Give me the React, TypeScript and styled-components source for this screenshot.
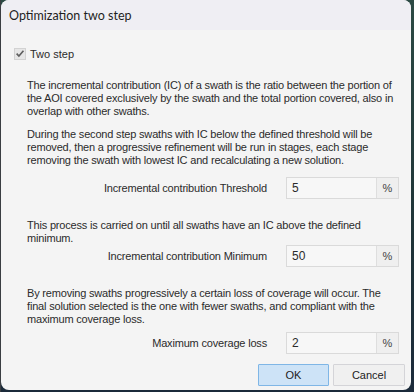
import React from 'react'
import styled, {createGlobalStyle} from 'styled-components'

const GlobalStyle = createGlobalStyle`
  html, body {
    margin: 0;
    padding: 0;
    background: #233a37;
  }
  body {
    width: 414px;
    height: 392px;
    overflow: hidden;
  }
`

const Fields = [
    {label: 'Incremental contribution Threshold', value: '5'},
    {label: 'Incremental contribution Minimum', value: '50'},
    {label: 'Maximum coverage loss', value: '2'},
]

export default function App() {
    return (
        <>
            <GlobalStyle />
            <Desktop>
                <Window>
                    <TitleBar>Optimization two step</TitleBar>
                    <Body>
                        <CheckRow>
                            <CheckBox>
                                <svg width="11" height="11" viewBox="0 0 11 11">
                                    <path d="M1.8 5.6 L4.3 8.2 L9.3 2.4" fill="none" stroke="#5f5f5f" strokeWidth="1.8" />
                                </svg>
                            </CheckBox>
                            <CheckLabel>Two step</CheckLabel>
                        </CheckRow>

                        <Paragraph top={19}>
                            The incremental contribution (IC) of a swath is the ratio between the portion of<br />
                            the AOI covered exclusively by the swath and the total portion covered, also in<br />
                            overlap with other swaths.
                        </Paragraph>
                        <Paragraph top={10}>
                            During the second step swaths with IC below the defined threshold will be<br />
                            removed, then a progressive refinement will be run in stages, each stage<br />
                            removing the swath with lowest IC and recalculating a new solution.
                        </Paragraph>
                        <FieldRow top={10}>
                            <FieldLabel>{Fields[0].label}</FieldLabel>
                            <Field>
                                <FieldValue>{Fields[0].value}</FieldValue>
                                <Unit>%</Unit>
                            </Field>
                        </FieldRow>

                        <Paragraph top={20}>
                            This process is carried on until all swaths have an IC above the defined<br />
                            minimum.
                        </Paragraph>
                        <FieldRow top={0}>
                            <FieldLabel>{Fields[1].label}</FieldLabel>
                            <Field>
                                <FieldValue>{Fields[1].value}</FieldValue>
                                <Unit>%</Unit>
                            </Field>
                        </FieldRow>

                        <Paragraph top={20}>
                            By removing swaths progressively a certain loss of coverage will occur. The<br />
                            final solution selected is the one with fewer swaths, and compliant with the<br />
                            maximum coverage loss.
                        </Paragraph>
                        <FieldRow top={6}>
                            <FieldLabel>{Fields[2].label}</FieldLabel>
                            <Field>
                                <FieldValue>{Fields[2].value}</FieldValue>
                                <Unit>%</Unit>
                            </Field>
                        </FieldRow>

                        <ButtonRow>
                            <Button primary>OK</Button>
                            <Button>Cancel</Button>
                        </ButtonRow>
                    </Body>
                </Window>
            </Desktop>
        </>
    )
}

const Desktop = styled.div`
  width: 414px;
  height: 392px;
  background: linear-gradient(180deg, #2c4a44 0%, #1f3438 60%, #1b2a3a 100%);
  padding-left: 1px;
  box-sizing: border-box;
  border-left: 1px solid #3a3d42;
`

const Window = styled.div`
  width: 410px;
  height: 390px;
  margin-left: -1px;
  background: #f4f4f4;
  border-radius: 8px;
  overflow: hidden;
  display: flex;
  flex-direction: column;
  font-family: 'Liberation Sans', Arial, sans-serif;
  color: #2b2b2b;
`

const TitleBar = styled.div`
  height: 30px;
  flex: none;
  display: flex;
  align-items: center;
  padding-left: 8px;
  background: #efeef3;
  font-family: Lato, 'Open Sans', sans-serif;
  font-size: 12.5px;
  color: #1e1e1e;
`

const Body = styled.div`
  display: flex;
  flex-direction: column;
  padding: 0 12px 0 13px;
`

const CheckRow = styled.div`
  display: flex;
  align-items: center;
  gap: 4px;
  margin-top: 17px;
  height: 13px;
`

const CheckBox = styled.span`
  width: 12px;
  height: 12px;
  box-sizing: border-box;
  border: 1px solid #d2d2d2;
  background: #e6e6e6;
  display: flex;
  align-items: center;
  justify-content: center;
`

const CheckLabel = styled.span`
  font-size: 11px;
`

const Paragraph = styled.p<{top: number}>`
  margin: ${p => p.top}px 0 0 13px;
  font-size: 11px;
  letter-spacing: -0.18px;
  line-height: 13px;
  white-space: nowrap;
`

const FieldRow = styled.div<{top: number}>`
  display: flex;
  justify-content: flex-end;
  align-items: center;
  gap: 19px;
  margin-top: ${p => p.top}px;
`

const FieldLabel = styled.span`
  font-size: 11px;
  letter-spacing: -0.18px;
`

const Field = styled.div`
  width: 113px;
  height: 22px;
  box-sizing: border-box;
  border: 1px solid #dadada;
  background: #f7f7f7;
  display: flex;
`

const FieldValue = styled.span`
  flex: 1;
  display: flex;
  align-items: center;
  padding-left: 5px;
  font-size: 12px;
`

const Unit = styled.span`
  width: 21px;
  border-left: 1px solid #dedede;
  background: #efefef;
  display: flex;
  align-items: center;
  justify-content: center;
  font-size: 11px;
  color: #444;
`

const ButtonRow = styled.div`
  display: flex;
  justify-content: flex-end;
  gap: 4px;
  margin: 10px -6px 0 0;
`

const Button = styled.button<{primary?: boolean}>`
  width: ${p => (p.primary ? 71 : 72)}px;
  height: 22px;
  border: 1px solid ${p => (p.primary ? '#7fb6e6' : '#d4d4d8')};
  background: ${p => (p.primary ? '#cde3f7' : '#f0f0f0')};
  border-radius: 1px;
  font-family: 'Liberation Sans', Arial, sans-serif;
  font-size: 11px;
  color: #222;
  padding: 0;
`
